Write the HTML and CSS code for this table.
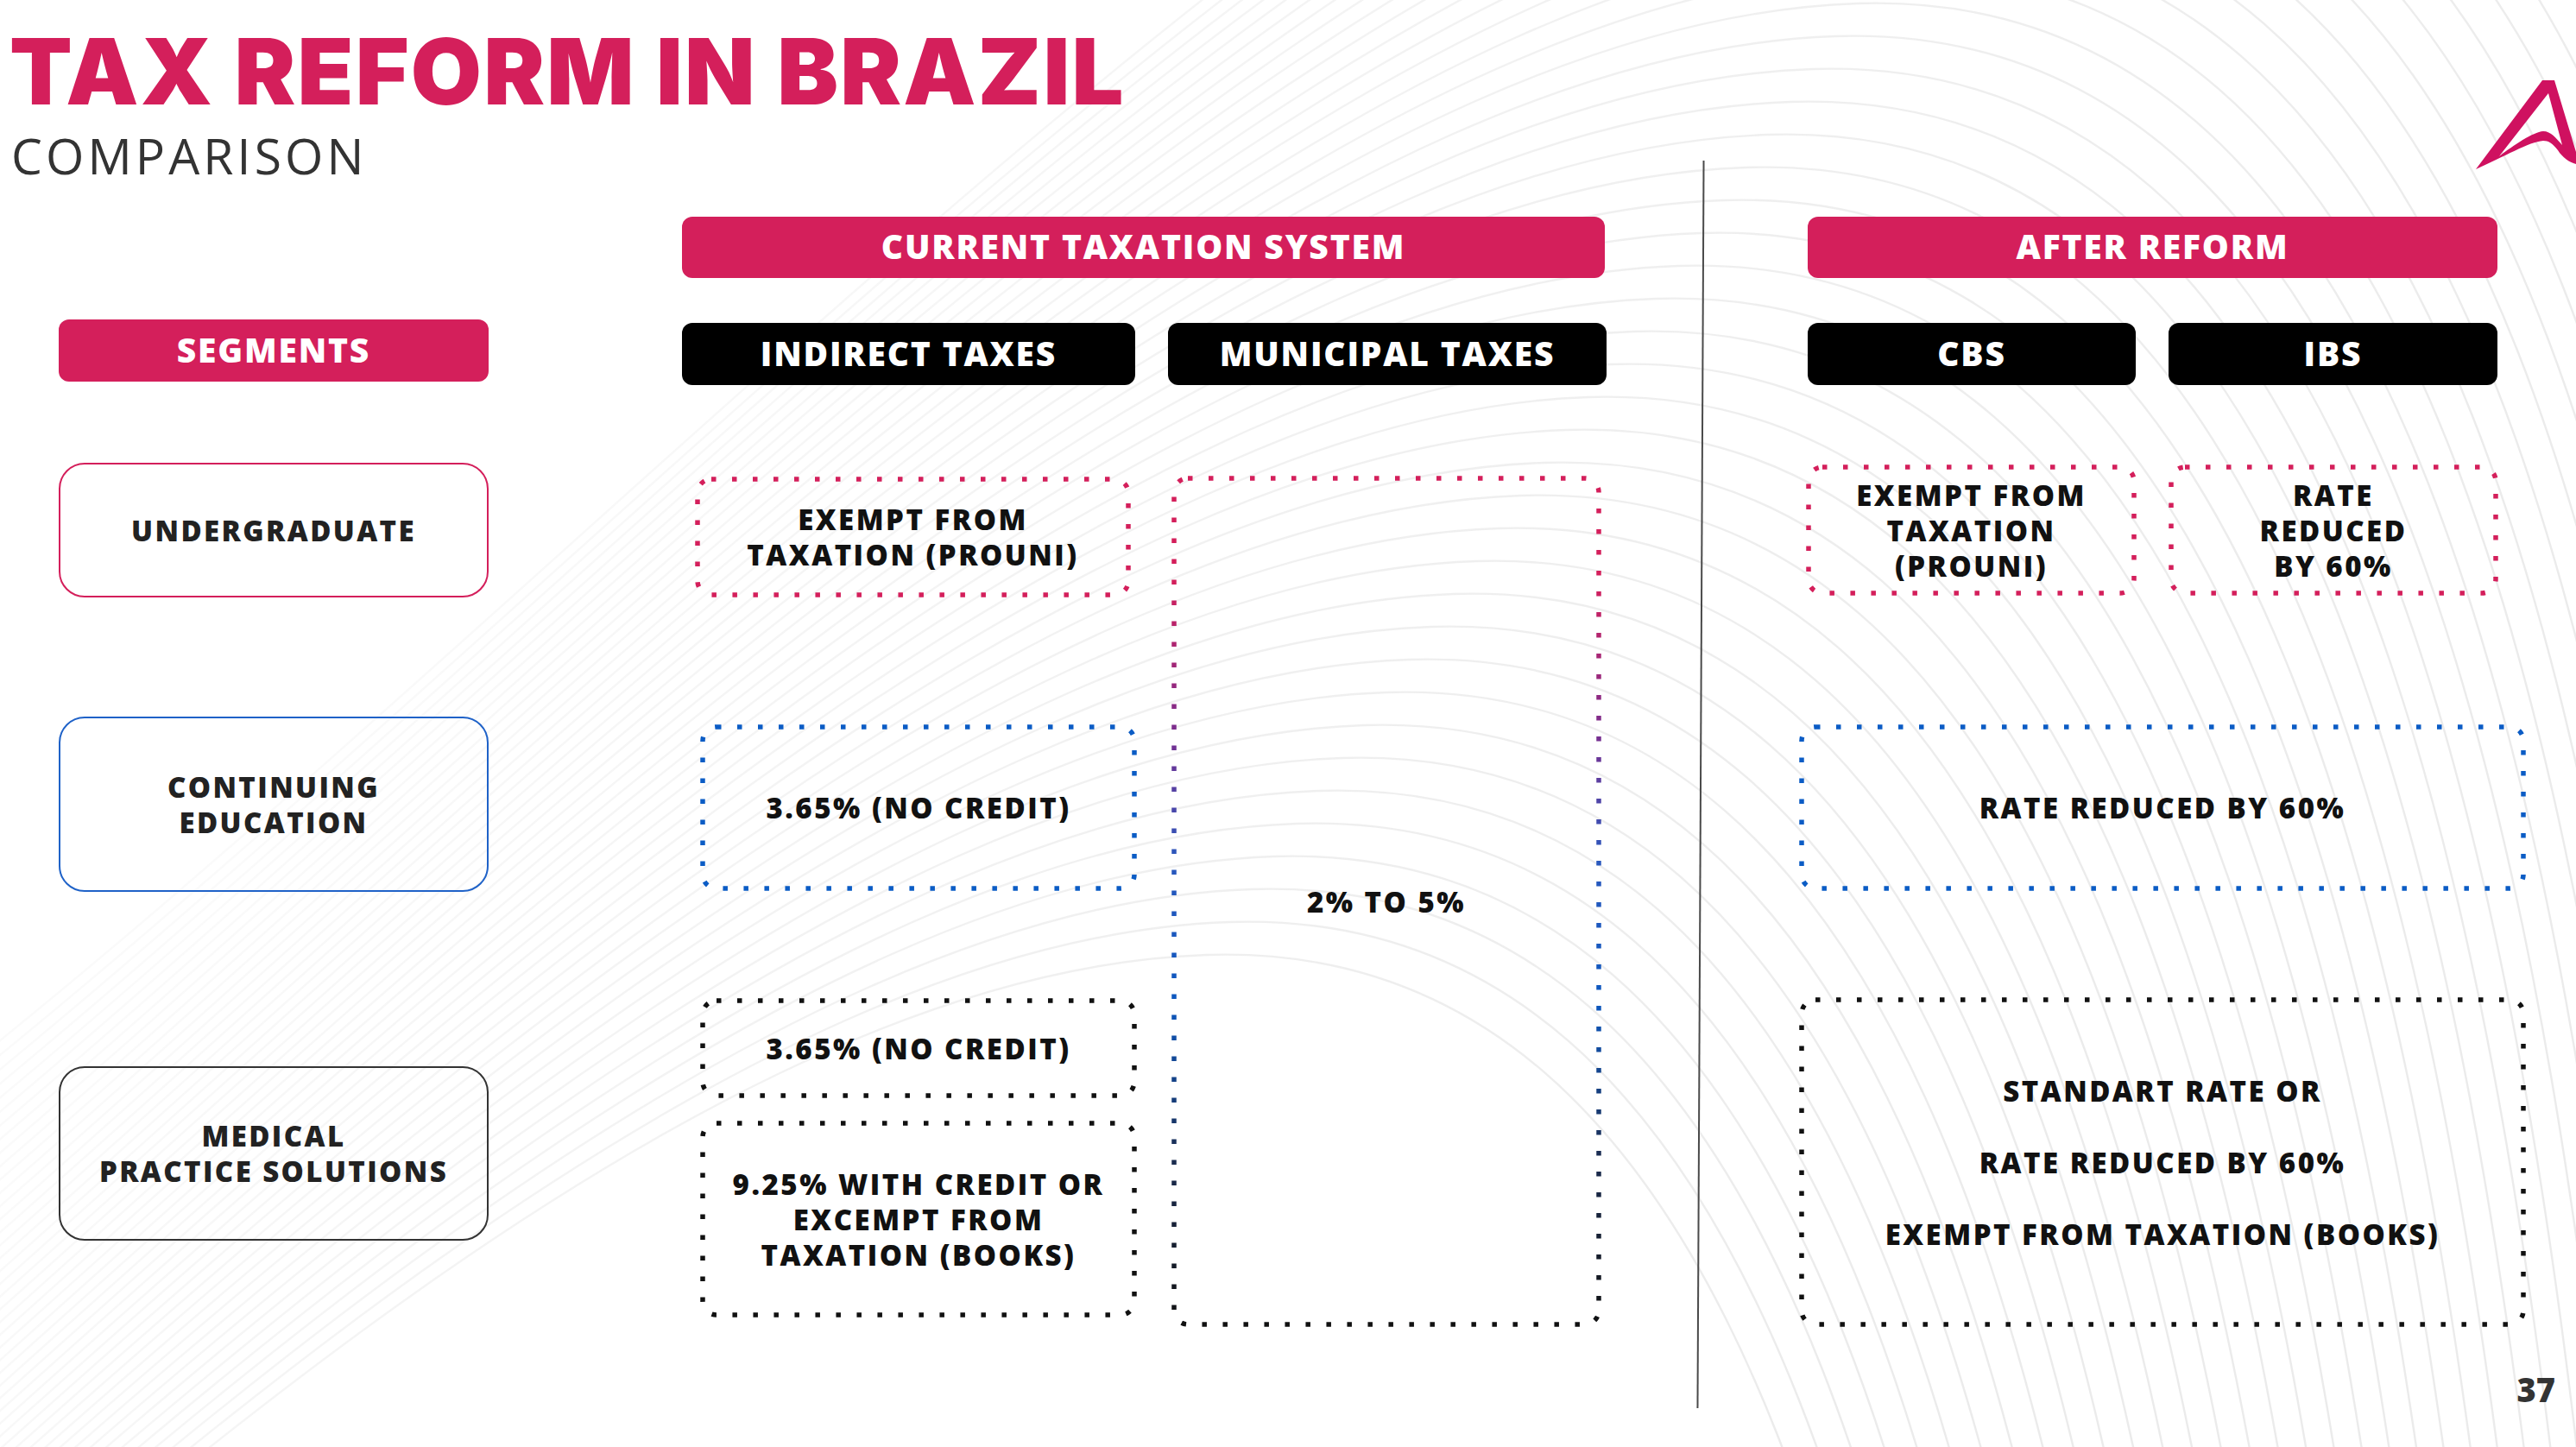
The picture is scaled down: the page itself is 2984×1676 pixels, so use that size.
FILE: index.html
```html
<!DOCTYPE html>
<html lang="en">
<head>
<meta charset="utf-8">
<title>Tax Reform in Brazil – Comparison</title>
<link rel="stylesheet" href="styles.css">
</head>
<body>
<div class="slide">
  <svg class="bg" viewBox="0 0 2984 1676" preserveAspectRatio="none" aria-hidden="true">
    <defs>
      <linearGradient id="bgfade" gradientUnits="userSpaceOnUse" x1="0" y1="0" x2="2984" y2="0">
        <stop offset="0" stop-color="#fafafa"/>
        <stop offset="0.5" stop-color="#f3f3f3"/>
        <stop offset="1" stop-color="#ebebeb"/>
      </linearGradient>
      <path id="arc" d="M-700 1950 C 250 1320 1350 -80 2230 -110 C 2850 -130 3060 700 3160 1950"/>
    </defs>
    <g class="bg-lines">
      <use href="#arc" transform="translate(312 -456)"/>
      <use href="#arc" transform="translate(286 -418)"/>
      <use href="#arc" transform="translate(260 -380)"/>
      <use href="#arc" transform="translate(234 -342)"/>
      <use href="#arc" transform="translate(208 -304)"/>
      <use href="#arc" transform="translate(182 -266)"/>
      <use href="#arc" transform="translate(156 -228)"/>
      <use href="#arc" transform="translate(130 -190)"/>
      <use href="#arc" transform="translate(104 -152)"/>
      <use href="#arc" transform="translate(78 -114)"/>
      <use href="#arc" transform="translate(52 -76)"/>
      <use href="#arc" transform="translate(26 -38)"/>
      <use href="#arc"/>
      <use href="#arc" transform="translate(-26 38)"/>
      <use href="#arc" transform="translate(-52 76)"/>
      <use href="#arc" transform="translate(-78 114)"/>
      <use href="#arc" transform="translate(-104 152)"/>
      <use href="#arc" transform="translate(-130 190)"/>
      <use href="#arc" transform="translate(-156 228)"/>
      <use href="#arc" transform="translate(-182 266)"/>
      <use href="#arc" transform="translate(-208 304)"/>
      <use href="#arc" transform="translate(-234 342)"/>
      <use href="#arc" transform="translate(-260 380)"/>
      <use href="#arc" transform="translate(-286 418)"/>
      <use href="#arc" transform="translate(-312 456)"/>
      <use href="#arc" transform="translate(-338 494)"/>
      <use href="#arc" transform="translate(-364 532)"/>
      <use href="#arc" transform="translate(-390 570)"/>
      <use href="#arc" transform="translate(-416 608)"/>
      <use href="#arc" transform="translate(-442 646)"/>
      <use href="#arc" transform="translate(-468 684)"/>
      <use href="#arc" transform="translate(-494 722)"/>
      <use href="#arc" transform="translate(-520 760)"/>
      <use href="#arc" transform="translate(-546 798)"/>
      <use href="#arc" transform="translate(-572 836)"/>
      <use href="#arc" transform="translate(-598 874)"/>
      <use href="#arc" transform="translate(-624 912)"/>
      <use href="#arc" transform="translate(-650 950)"/>
      <use href="#arc" transform="translate(-676 988)"/>
      <use href="#arc" transform="translate(-702 1026)"/>
      <use href="#arc" transform="translate(-728 1064)"/>
      <use href="#arc" transform="translate(-754 1102)"/>
      <use href="#arc" transform="translate(-780 1140)"/>
      <use href="#arc" transform="translate(-806 1178)"/>
      <use href="#arc" transform="translate(-832 1216)"/>
    </g>
  </svg>

  <header class="head">
    <h1 class="title">TAX REFORM IN BRAZIL</h1>
    <p class="subtitle">COMPARISON</p>
  </header>

  <svg class="logo" viewBox="2860 85 124 115" aria-label="logo">
    <path fill-rule="evenodd" d="M2868 196 L2945 93 L2959 93 L2984 176 L2984 190 C2976 188 2968 182 2963 174 C2957 166 2952 163 2946 163 C2930 164 2900 182 2868 196 Z M2952 108 L2895 181 C2912 168 2934 153 2946 152 C2955 152 2961 160 2968 168 Z"/>
  </svg>

  <main class="grid">
    <div class="bar pink c-current">CURRENT TAXATION SYSTEM</div>
    <div class="bar pink c-after">AFTER REFORM</div>
    <div class="divider"></div>

    <div class="bar pink head-row c-seg">SEGMENTS</div>
    <div class="bar black head-row c-ind">INDIRECT TAXES</div>
    <div class="bar black head-row c-mun">MUNICIPAL TAXES</div>
    <div class="bar black head-row c-cbs">CBS</div>
    <div class="bar black head-row c-ibs">IBS</div>

    <div class="seg seg-ug">UNDERGRADUATE</div>
    <div class="seg seg-ce">CONTINUING<br>EDUCATION</div>
    <div class="seg seg-med">MEDICAL<br>PRACTICE SOLUTIONS</div>

    <div class="dot-box d-prouni">
      <svg class="dots"><rect class="st-pink" width="100%" height="100%" rx="16"/></svg>
      <span>EXEMPT FROM<br>TAXATION (PROUNI)</span>
    </div>

    <div class="dot-box d-mun">
      <svg class="dots">
        <defs>
          <linearGradient id="mungrad" x1="0" y1="0" x2="0" y2="1">
            <stop offset="0" stop-color="#d41f5b"/>
            <stop offset="0.12" stop-color="#d41f5b"/>
            <stop offset="0.3" stop-color="#7a2d8e"/>
            <stop offset="0.45" stop-color="#2a58bd"/>
            <stop offset="0.62" stop-color="#0d58bf"/>
            <stop offset="0.8" stop-color="#1b2d52"/>
            <stop offset="1" stop-color="#111111"/>
          </linearGradient>
        </defs>
        <rect class="st-grad" width="100%" height="100%" rx="16"/>
      </svg>
      <span>2% TO 5%</span>
    </div>

    <div class="dot-box d-cbs">
      <svg class="dots"><rect class="st-pink" width="100%" height="100%" rx="16"/></svg>
      <span>EXEMPT FROM<br>TAXATION<br>(PROUNI)</span>
    </div>

    <div class="dot-box d-ibs">
      <svg class="dots"><rect class="st-pink" width="100%" height="100%" rx="16"/></svg>
      <span>RATE<br>REDUCED<br>BY 60%</span>
    </div>

    <div class="dot-box d-ind-ce">
      <svg class="dots"><rect class="st-blue" width="100%" height="100%" rx="16"/></svg>
      <span>3.65% (NO CREDIT)</span>
    </div>

    <div class="dot-box d-after-ce">
      <svg class="dots"><rect class="st-blue" width="100%" height="100%" rx="16"/></svg>
      <span>RATE REDUCED BY 60%</span>
    </div>

    <div class="stack">
      <div class="dot-box d-small">
        <svg class="dots"><rect class="st-black" width="100%" height="100%" rx="16"/></svg>
        <span>3.65% (NO CREDIT)</span>
      </div>
      <div class="dot-box d-tall">
        <svg class="dots"><rect class="st-black" width="100%" height="100%" rx="16"/></svg>
        <span>9.25% WITH CREDIT OR<br>EXCEMPT FROM<br>TAXATION (BOOKS)</span>
      </div>
    </div>

    <div class="dot-box d-after-med">
      <svg class="dots"><rect class="st-black" width="100%" height="100%" rx="16"/></svg>
      <div class="lines">
        <span>STANDART RATE OR</span>
        <span>RATE REDUCED BY 60%</span>
        <span>EXEMPT FROM TAXATION (BOOKS)</span>
      </div>
    </div>
  </main>

  <footer class="pagenum">37</footer>
</div>
</body>
</html>
```

FILE: styles.css
```css
* { box-sizing: border-box; }

html, body {
  margin: 0;
  padding: 0;
  background: #ffffff;
}

.slide {
  position: relative;
  width: 2984px;
  height: 1676px;
  overflow: hidden;
  background: #ffffff;
  font-family: "Open Sans", "Liberation Sans", sans-serif;
  color: #111;
}

.bg {
  position: absolute;
  left: 0;
  top: 0;
  width: 2984px;
  height: 1676px;
  z-index: 0;
}

.bg-lines {
  fill: none;
  stroke: url(#bgfade);
  stroke-width: 2.4;
}

.head,
.grid,
.pagenum {
  position: relative;
  z-index: 1;
}

.head {
  padding: 30px 0 0 11px;
}

.title {
  margin: 0;
  font-family: "Inter", "Liberation Sans", sans-serif;
  font-weight: 900;
  font-size: 106px;
  line-height: 106px;
  letter-spacing: 2.2px;
  color: #d41f5b;
}

.subtitle {
  margin: 16px 0 0 2px;
  font-family: "Open Sans", "Liberation Sans", sans-serif;
  font-weight: 400;
  font-size: 57px;
  line-height: 57px;
  letter-spacing: 4.1px;
  color: #333333;
}

.logo {
  position: absolute;
  left: 2860px;
  top: 85px;
  width: 124px;
  height: 115px;
  fill: #cf1160;
  z-index: 1;
}

/* ---------- main comparison grid ---------- */
.grid {
  display: grid;
  margin: 42px 0 0 68px;
  grid-template-columns: 498px 224px 526px 37px 508px 233px 380px 38px 381px;
  grid-template-rows: 71px 48px 76px 90px 156px 138px 203px 122px 382px;
}

.bar {
  display: flex;
  align-items: center;
  justify-content: center;
  padding-bottom: 4px;
  border-radius: 12px;
  color: #ffffff;
  font-weight: 800;
  font-size: 39px;
  line-height: 1;
  letter-spacing: 1.8px;
  white-space: nowrap;
}

.pink { background: #d41f5b; }
.black { background: #000000; }

.c-current { grid-column: 3 / 6; grid-row: 1; margin-right: 2px; }
.c-after { grid-column: 7 / 10; grid-row: 1; }

.head-row { grid-row: 3; align-self: start; height: 72px; }
.c-seg { grid-column: 1; }
.c-ind { grid-column: 3; margin-top: 4px; margin-right: 1px; }
.c-mun { grid-column: 5; margin-top: 4px; }
.c-cbs { grid-column: 7; margin-top: 4px; }
.c-ibs { grid-column: 9; margin-top: 4px; }

.divider {
  grid-column: 6;
  grid-row: 1 / 10;
  justify-self: start;
  align-self: start;
  width: 2px;
  height: 1445px;
  margin: -65px 0 0 108px;
  background: #4a4a4a;
  transform: rotate(0.28deg);
}

/* ---------- segment cards ---------- */
.seg {
  grid-column: 1;
  display: flex;
  align-items: center;
  justify-content: center;
  text-align: center;
  border: 2px solid #333;
  border-radius: 30px;
  font-weight: 800;
  font-size: 33px;
  line-height: 41px;
  letter-spacing: 2.4px;
  color: #222222;
}

.seg-ug { grid-row: 5; border-color: #d41f5b; }
.seg-ce { grid-row: 7; border-color: #1f62c8; }
.seg-med {
  grid-row: 9;
  align-self: start;
  height: 202px;
  margin-top: 80px;
  border-color: #333333;
}

/* ---------- dotted boxes ---------- */
.dot-box {
  position: relative;
  display: flex;
  align-items: center;
  justify-content: center;
  text-align: center;
  font-weight: 800;
  font-size: 33px;
  line-height: 41px;
  letter-spacing: 2.5px;
  color: #111111;
}

.dot-box > span,
.dot-box > .lines {
  position: relative;
}

.dots {
  position: absolute;
  top: 3px;
  left: 3px;
  width: calc(100% - 6px);
  height: calc(100% - 6px);
  overflow: visible;
  fill: none;
  stroke-width: 5.5;
  stroke-dasharray: 5.5 18.5;
}

.st-pink { stroke: #d41f5b; }
.st-blue { stroke: #0b5cc5; }
.st-black { stroke: #111111; }
.st-grad { stroke: url(#mungrad); }

.d-prouni { grid-column: 3; grid-row: 5; margin: 16px 6px 0 15px; }
.d-mun { grid-column: 5; grid-row: 5 / 10; margin: 15px 6px 0 4px; }
.d-cbs { grid-column: 7; grid-row: 5; margin: 2px -1px 2px -2px; }
.d-ibs { grid-column: 9; grid-row: 5; margin: 2px -1px 2px 0; }
.d-ind-ce { grid-column: 3; grid-row: 7; margin: 9px -1px 1px 21px; }
.d-after-ce { grid-column: 7 / 10; grid-row: 7; margin: 9px -33px 1px -10px; }

.stack {
  grid-column: 3;
  grid-row: 9;
  display: flex;
  flex-direction: column;
  gap: 26px;
  margin: 1px -1px 0 21px;
}

.d-small { height: 116px; }
.d-tall { height: 228px; }

.d-after-med { grid-column: 7 / 10; grid-row: 9; margin: 0 -33px 0 -10px; }

.lines {
  display: flex;
  flex-direction: column;
  align-items: center;
  gap: 42px;
}

/* ---------- page number ---------- */
.pagenum {
  margin-top: 53px;
  padding-right: 24px;
  text-align: right;
  font-weight: 800;
  font-size: 38px;
  line-height: 38px;
  color: #333333;
}
```
